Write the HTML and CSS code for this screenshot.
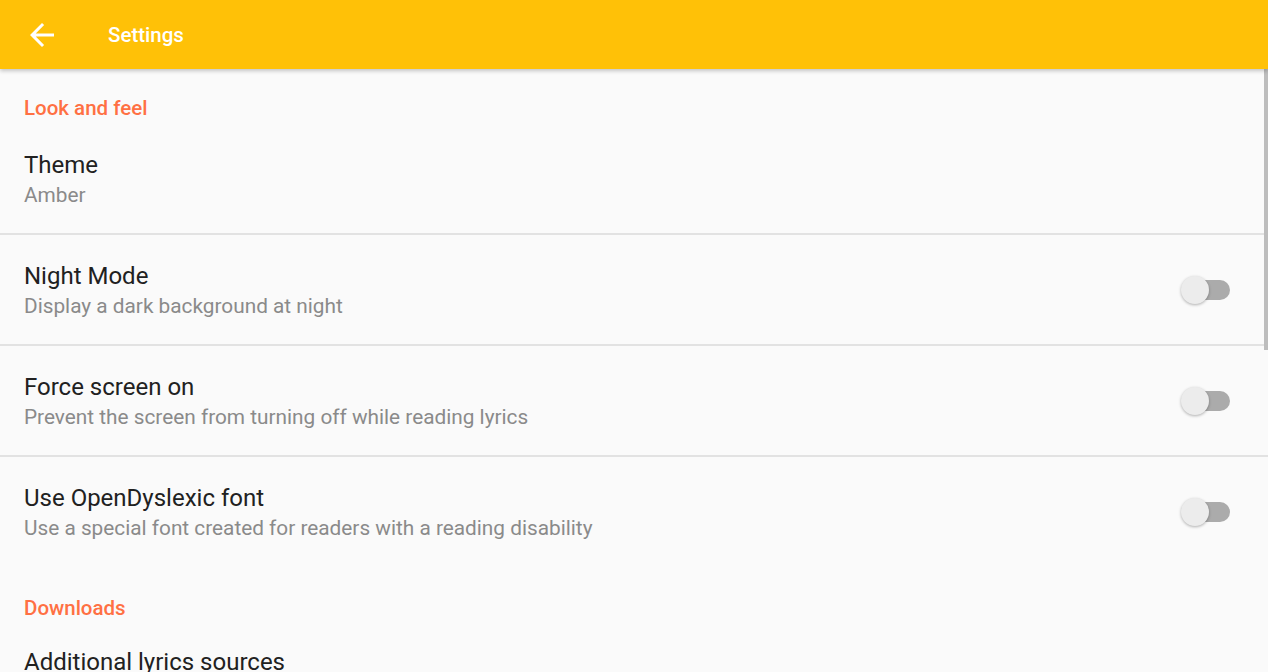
FILE: index.html
```html
<!DOCTYPE html>
<html>
<head>
<meta charset="utf-8">
<link rel="stylesheet" href="styles.css">
</head>
<body>
<header class="toolbar">
  <svg class="back" viewBox="0 0 24 24" width="36" height="36"><path fill="#fff" d="M20 11H7.83l5.59-5.59L12 4l-8 8 8 8 1.41-1.41L7.83 13H20v-2z"/></svg>
  <span class="title">Settings</span>
</header>
<main class="list">
  <div class="category first">Look and feel</div>
  <div class="row divided">
    <div class="texts"><div class="t">Theme</div><div class="s">Amber</div></div>
  </div>
  <div class="row divided">
    <div class="texts"><div class="t">Night Mode</div><div class="s">Display a dark background at night</div></div>
    <div class="switch"><span class="track"></span><span class="thumb"></span></div>
  </div>
  <div class="row divided">
    <div class="texts"><div class="t">Force screen on</div><div class="s">Prevent the screen from turning off while reading lyrics</div></div>
    <div class="switch"><span class="track"></span><span class="thumb"></span></div>
  </div>
  <div class="row">
    <div class="texts"><div class="t">Use OpenDyslexic font</div><div class="s">Use a special font created for readers with a reading disability</div></div>
    <div class="switch"><span class="track"></span><span class="thumb"></span></div>
  </div>
  <div class="category">Downloads</div>
  <div class="row">
    <div class="texts"><div class="t">Additional lyrics sources</div><div class="s">&nbsp;</div></div>
  </div>
</main>
<div class="scrollbar"></div>
</body>
</html>
```
FILE: styles.css
```css
html, body {
  margin: 0;
  padding: 0;
  height: 672px;
  overflow: hidden;
  background: #fafafa;
  font-family: Roboto, "Noto Sans", sans-serif;
}
.toolbar {
  position: relative;
  z-index: 2;
  height: 69px;
  background: #ffc107;
  display: flex;
  align-items: center;
  box-shadow: 0 2px 4px rgba(0,0,0,0.22);
}
.back {
  margin-left: 24px;
  flex: none;
}
.title {
  margin-left: 48px;
  color: #fff;
  font-size: 20.5px;
  font-weight: 500;
}
.list {
  display: flex;
  flex-direction: column;
}
.category {
  height: 55px;
  box-sizing: border-box;
  padding: 30px 24px 0;
  line-height: 24px;
  font-size: 20.5px;
  font-weight: 500;
  color: #ff7043;
}
.category.first {
  padding-top: 27px;
}
.row {
  height: 109px;
  display: flex;
  align-items: flex-start;
  padding: 0 38px 0 24px;
}
.row.divided {
  border-bottom: 2px solid #e2e2e2;
}
.texts {
  flex: 1;
  padding-top: 27px;
}
.t {
  font-size: 24px;
  line-height: 28px;
  color: #212121;
}
.s {
  font-size: 20.8px;
  line-height: 26px;
  margin-top: 3px;
  color: #8a8a8a;
}
.switch {
  align-self: center;
  position: relative;
  width: 49px;
  height: 30px;
  flex: none;
}
.track {
  position: absolute;
  left: 3px;
  top: 5px;
  width: 46px;
  height: 20px;
  border-radius: 10px;
  background: #ababab;
}
.thumb {
  position: absolute;
  left: 0;
  top: 1px;
  width: 28px;
  height: 28px;
  border-radius: 50%;
  background: #ececec;
  box-shadow: 0 1px 3px rgba(0,0,0,0.3);
}
.scrollbar {
  position: absolute;
  right: 0;
  top: 69px;
  width: 4px;
  height: 281px;
  background: #bdbdbd;
}
```
